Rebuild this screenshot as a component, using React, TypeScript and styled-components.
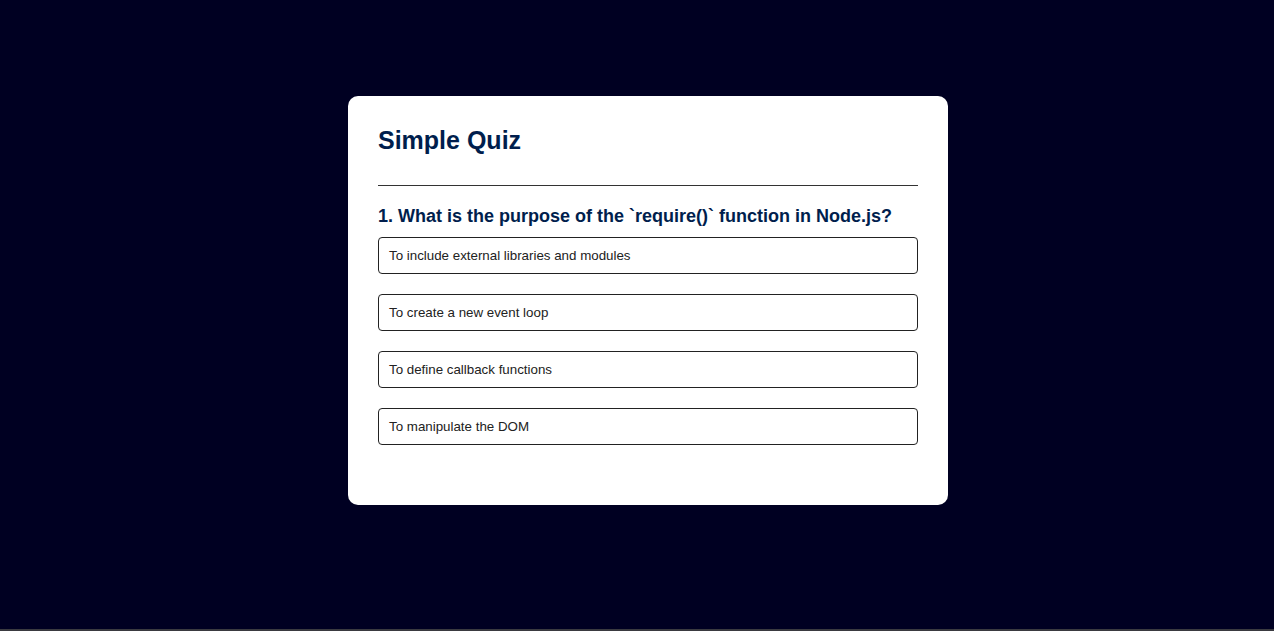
import React from "react";
import styled, { createGlobalStyle } from "styled-components";

const GlobalStyle = createGlobalStyle`
  * {
    box-sizing: border-box;
  }
  body {
    margin: 0;
    background: #000022;
    font-family: "Liberation Sans", Arial, sans-serif;
  }
`;

const Page = styled.div`
  height: 631px;
  padding: 96px 0 0 22px;
  border-bottom: 2px solid #3a3a40;
`;

const Card = styled.div`
  background: #fff;
  width: 600px;
  margin: 0 auto;
  border-radius: 10px;
  padding: 30px;
`;

const Title = styled.h1`
  margin: 0;
  font-size: 25px;
  font-weight: 700;
  color: #001e4d;
  border-bottom: 1px solid #333;
  padding-bottom: 30px;
`;

const Quiz = styled.div`
  padding: 20px 0 30px;
`;

const Question = styled.h2`
  margin: 0;
  font-size: 18px;
  font-weight: 700;
  color: #001e4d;
`;

const Answers = styled.div`
  display: flex;
  flex-direction: column;
  gap: 20px;
  margin-top: 10px;
`;

const AnswerButton = styled.button`
  display: block;
  width: 100%;
  background: #fff;
  color: #222;
  font-family: "Liberation Sans", Arial, sans-serif;
  font-size: 13.33px;
  line-height: 15px;
  text-align: left;
  border: 1px solid #222;
  border-radius: 4px;
  padding: 10px;
  margin: 0;
  cursor: pointer;
`;

const answers = [
  "To include external libraries and modules",
  "To create a new event loop",
  "To define callback functions",
  "To manipulate the DOM",
];

export default function App() {
  return (
    <>
      <GlobalStyle />
      <Page>
        <Card>
          <Title>Simple Quiz</Title>
          <Quiz>
            <Question>
              1. What is the purpose of the `require()` function in Node.js?
            </Question>
            <Answers>
              {answers.map((a) => (
                <AnswerButton key={a}>{a}</AnswerButton>
              ))}
            </Answers>
          </Quiz>
        </Card>
      </Page>
    </>
  );
}
